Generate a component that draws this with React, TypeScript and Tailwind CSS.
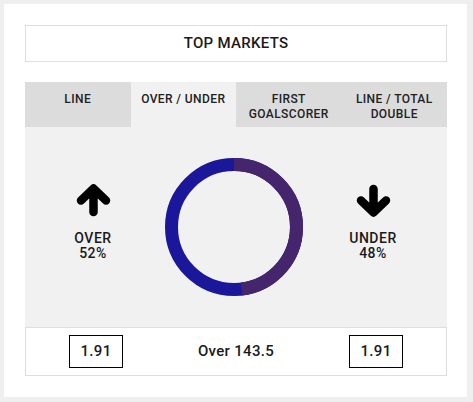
import React from "react";

const tabs = ["Line", "Over / Under", "First Goalscorer", "Line / Total Double"];

const Arrow = ({ down = false }: { down?: boolean }) => (
  <svg width="35" height="33" viewBox="0 0 35 33" className={down ? "rotate-180" : ""}>
    <path
      d="M17.5 28 L17.5 5 M5 16.5 L17.5 4.5 L30 16.5"
      fill="none"
      stroke="#000"
      strokeWidth="8.5"
      strokeLinecap="round"
      strokeLinejoin="round"
    />
  </svg>
);

const Donut = ({ over }: { over: number }) => {
  const r = 62.5;
  const c = 2 * Math.PI * r;
  const under = 100 - over;
  return (
    <svg width="138" height="138" viewBox="0 0 138 138">
      <g transform="rotate(-90 69 69)">
        <circle cx="69" cy="69" r={r} fill="none" stroke="#1b179a" strokeWidth="13" />
        <circle
          cx="69"
          cy="69"
          r={r}
          fill="none"
          stroke="#45256b"
          strokeWidth="13"
          strokeDasharray={`${(c * under) / 100} ${c}`}
        />
      </g>
    </svg>
  );
};

const Side = ({ label, pct, down }: { label: string; pct: string; down?: boolean }) => (
  <div className="flex flex-col items-center self-start pt-[57px]">
    <Arrow down={down} />
    <div className="mt-[13px] text-[14px] font-medium leading-[16px] tracking-[0.5px] text-center">{label}</div>
    <div className="-mt-[1px] text-[14px] font-medium leading-[16px] tracking-[0.5px] text-center">{pct}</div>
  </div>
);

export default function App() {
  return (
    <div className="w-[473px] h-[402px] bg-[#efefef] pl-[4px] pt-[4px] font-['Roboto',sans-serif] text-[#1a1a1a]">
      <div className="w-[463px] h-[393px] bg-white pt-[21px] pl-[21px]">
        {/* title */}
        <div className="w-[422px] h-[37px] border border-[#dedede] flex items-center justify-center text-[15px] font-medium tracking-[0.3px]">
          TOP MARKETS
        </div>

        {/* tabs */}
        <div className="w-[422px] mt-[20px] grid grid-cols-4 h-[45px]">
          {tabs.map((t, i) => (
            <div
              key={t}
              className={`flex items-start justify-center pt-[10px] text-center uppercase text-[12px] font-medium leading-[15px] tracking-[0.4px] px-2 text-[#222] ${
                i === 1 ? "bg-[#f1f1f1]" : "bg-[#dcdcdc]"
              }`}
            >
              {t}
            </div>
          ))}
        </div>

        {/* chart */}
        <div className="w-[422px] h-[200px] bg-[#f1f1f1] grid grid-cols-[136px_146px_132px] items-center pr-2">
          <Side label="OVER" pct="52%" />
          <div className="flex justify-center">
            <Donut over={52} />
          </div>
          <Side label="UNDER" pct="48%" down />
        </div>

        {/* odds row */}
        <div className="w-[422px] h-[49px] border border-[#dedede] grid grid-cols-3 items-center text-[15px] font-medium tracking-[0.3px]">
          <div className="flex justify-center">
            <div className="w-[54px] h-[33px] border border-black flex items-center justify-center">1.91</div>
          </div>
          <div className="text-center">Over 143.5</div>
          <div className="flex justify-center">
            <div className="w-[54px] h-[33px] border border-black flex items-center justify-center">1.91</div>
          </div>
        </div>
      </div>
    </div>
  );
}
